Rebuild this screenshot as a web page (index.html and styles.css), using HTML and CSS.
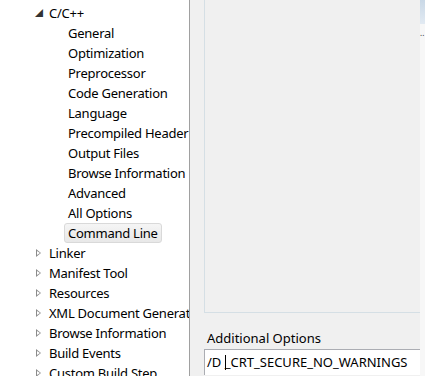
FILE: index.html
```html
<!DOCTYPE html>
<html lang="en">
<head>
    <meta charset="utf-8">
    <title>Property Pages</title>
    <link rel="stylesheet" href="styles.css">
</head>
<body>
    <div class="tree">
        <div class="row open"><span class="arrow">&#9698;</span>C/C++</div>
        <div class="row child">General</div>
        <div class="row child">Optimization</div>
        <div class="row child">Preprocessor</div>
        <div class="row child">Code Generation</div>
        <div class="row child">Language</div>
        <div class="row child">Precompiled Header</div>
        <div class="row child">Output Files</div>
        <div class="row child">Browse Information</div>
        <div class="row child">Advanced</div>
        <div class="row child">All Options</div>
        <div class="row child"><span class="selected">Command Line</span></div>
        <div class="row"><span class="arrow closed"></span>Linker</div>
        <div class="row"><span class="arrow closed"></span>Manifest Tool</div>
        <div class="row"><span class="arrow closed"></span>Resources</div>
        <div class="row"><span class="arrow closed"></span>XML Document Generator</div>
        <div class="row"><span class="arrow closed"></span>Browse Information</div>
        <div class="row"><span class="arrow closed"></span>Build Events</div>
        <div class="row"><span class="arrow closed"></span>Custom Build Step</div>
    </div>

    <div class="pane">
        <div class="main">
            <div class="group"></div>
            <div class="label">Additional Options</div>
            <div class="input">/D <span class="caret"></span>_CRT_SECURE_NO_WARNINGS</div>
        </div>
        <div class="edge">
            <div class="thumb"></div>
            <div class="dots">..</div>
        </div>
    </div>
</body>
</html>
```

FILE: styles.css
```css
body {
    margin: 0;
    height: 376px;
    overflow: hidden;
    display: flex;
    font-family: "Noto Sans", "Noto Sans CJK SC", sans-serif;
    font-size: 13px;
    color: #000;
    background-color: #f0f0f0;
}

.tree {
    width: 189px;
    flex-shrink: 0;
    background-color: #fff;
    border-right: 1px solid #a0a0a0;
    padding-top: 3px;
    overflow: hidden;
    white-space: nowrap;
    letter-spacing: -0.25px;
}

.row {
    height: 20px;
    line-height: 20px;
    padding-left: 35px;
    display: flex;
    align-items: center;
}

.row.child {
    padding-left: 68px;
}

.arrow {
    width: 14px;
    font-size: 8px;
    color: #333;
    line-height: 20px;
}

.arrow.closed {
    width: 0;
    height: 0;
    margin-right: 8px;
    margin-left: 1px;
    border-left: 5px solid #8c8c8c;
    border-top: 4px solid transparent;
    border-bottom: 4px solid transparent;
    position: relative;
}

.arrow.closed::after {
    content: "";
    position: absolute;
    left: -4px;
    top: -2px;
    border-left: 3px solid #fff;
    border-top: 2px solid transparent;
    border-bottom: 2px solid transparent;
}

.selected {
    padding: 0 3px;
    margin-left: -4px;
    height: 18px;
    line-height: 18px;
    border: 1px solid #d9d9d9;
    border-radius: 3px;
    background: linear-gradient(#f5f5f5, #e8e8e8);
}

.pane {
    flex: 1;
    display: flex;
}

.main {
    flex: 1;
    padding-left: 14px;
}

.group {
    height: 313px;
    border-left: 1px solid #d5dfe5;
    border-bottom: 1px solid #d5dfe5;
    box-sizing: border-box;
}

.label {
    padding: 16px 0 0 3px;
    height: 20px;
    line-height: 18px;
}

.input {
    height: 25px;
    border-top: 1px solid #abadb3;
    border-left: 1px solid #abadb3;
    background-color: #fff;
    padding-left: 2px;
    line-height: 24px;
}

.caret {
    display: inline-block;
    width: 1px;
    height: 15px;
    background-color: #000;
    vertical-align: -3px;
    margin-right: -1px;
}

.edge {
    width: 5px;
    background-color: #f7f7f7;
}

.thumb {
    height: 24px;
    background: linear-gradient(#c9d8e6, #e2eaf2);
}

.dots {
    font-size: 8px;
    line-height: 8px;
    margin-top: 5px;
    color: #333;
}
```
